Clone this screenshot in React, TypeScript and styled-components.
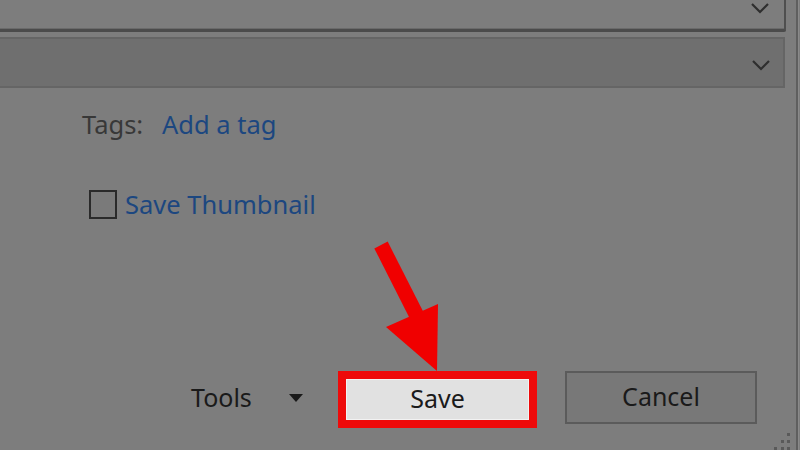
import styled, { createGlobalStyle } from "styled-components";

const GlobalStyle = createGlobalStyle`
  html, body {
    margin: 0;
    padding: 0;
    background: #7d7d7d;
  }
  #root {
    width: 800px;
    height: 450px;
  }
`;

const Page = styled.div`
  position: relative;
  width: 800px;
  height: 450px;
  overflow: hidden;
  display: flex;
  background: #7d7d7d;
  font-family: "Noto Sans", "Open Sans", sans-serif;
`;

const Dialog = styled.div`
  width: 796px;
  display: flex;
  flex-direction: column;
  border-right: 2px solid #5f5f5f;
  box-shadow: 1px 0 0 #8a8a8a;
`;

const Field = styled.div`
  display: flex;
  align-items: center;
  justify-content: flex-end;
  box-sizing: border-box;
  width: 786px;
  padding-right: 14px;
`;

const TopField = styled(Field)`
  height: 32px;
  align-items: flex-start;
  border-right: 2px solid #4f4f4f;
  border-bottom: 3px solid #4b4b4b;
  border-bottom-right-radius: 2px;
  box-shadow: inset 0 -1px 0 #6a6a6a;
`;

const ListField = styled(Field)`
  width: 785px;
  height: 51px;
  margin-top: 5px;
  background: #6f6f6f;
  border: 2px solid #656565;
  border-left: none;
  padding-right: 12px;
`;

const Chevron = ({ top }: { top: number }) => (
  <svg width="20" height="12" viewBox="0 0 20 12" style={{ marginTop: top }}>
    <path d="M2 2 L10 10 L18 2" fill="none" stroke="#2e2e2e" strokeWidth="2.2" />
  </svg>
);

const TagsRow = styled.div`
  display: flex;
  align-items: center;
  margin-top: 20px;
  padding-left: 82px;
  height: 32px;
  font-size: 25.5px;
`;

const Label = styled.span`
  color: #383838;
  width: 80px;
`;

const Link = styled.span`
  color: #1c4780;
`;

const CheckRow = styled.div`
  display: flex;
  align-items: center;
  gap: 8px;
  margin-top: 49px;
  padding-left: 89px;
  height: 30px;
  font-size: 25.5px;
`;

const Box = styled.span`
  box-sizing: border-box;
  width: 28px;
  height: 29px;
  border: 2px solid #2a2a2a;
  background: #7a7a7a;
`;

const Footer = styled.div`
  display: flex;
  align-items: flex-start;
  margin-top: 152px;
  padding-left: 191px;
  font-size: 25px;
  color: #1a1a1a;
`;

const Tools = styled.div`
  display: flex;
  align-items: center;
  justify-content: space-between;
  width: 112px;
  height: 52px;
  margin-right: 35px;
`;

const Caret = styled.span`
  width: 0;
  height: 0;
  margin-top: 2px;
  border-left: 7px solid transparent;
  border-right: 7px solid transparent;
  border-top: 8px solid #1a1a1a;
`;

const Highlight = styled.div`
  box-sizing: border-box;
  width: 199px;
  height: 57px;
  border: 8px solid #ee0a0a;
  margin-right: 28px;
`;

const Button = styled.div<{ $primary?: boolean }>`
  box-sizing: border-box;
  display: flex;
  align-items: center;
  justify-content: center;
  padding-bottom: 3px;
  width: ${(p) => (p.$primary ? "100%" : "192px")};
  height: ${(p) => (p.$primary ? "100%" : "53px")};
  background: ${(p) => (p.$primary ? "#e1e1e1" : "#787878")};
  border: ${(p) => (p.$primary ? "1px solid #f2f2f2" : "2px solid #5b5b5b")};
  color: #1a1a1a;
`;

const Grip = styled.svg`
  position: absolute;
  right: 9px;
  bottom: 0;
`;

const Arrow = styled.svg`
  position: absolute;
  left: 0;
  top: 0;
  pointer-events: none;
`;

const gripDots = [
  [14, 1],
  [8, 8],
  [14, 8],
  [1, 15],
  [8, 15],
  [14, 15],
];

export default function App() {
  return (
    <Page>
      <GlobalStyle />
      <Dialog>
        <TopField>
          <Chevron top={2} />
        </TopField>
        <ListField>
          <Chevron top={4} />
        </ListField>
        <TagsRow>
          <Label>Tags:</Label>
          <Link>Add a tag</Link>
        </TagsRow>
        <CheckRow>
          <Box />
          <Link>Save Thumbnail</Link>
        </CheckRow>
        <Footer>
          <Tools>
            <span>Tools</span>
            <Caret />
          </Tools>
          <Highlight>
            <Button $primary>Save</Button>
          </Highlight>
          <Button>Cancel</Button>
        </Footer>
      </Dialog>
      <Grip width="18" height="18" viewBox="0 0 18 18">
        {gripDots.map(([x, y], i) => (
          <rect key={i} x={x} y={y} width="3" height="3" fill="#5a5a5a" />
        ))}
      </Grip>
      <Arrow width="800" height="450" viewBox="0 0 800 450">
        <line x1="381" y1="245" x2="420" y2="322" stroke="#f00000" strokeWidth="15" />
        <polygon points="386,327 438,304 437,371" fill="#f00000" />
      </Arrow>
    </Page>
  );
}
